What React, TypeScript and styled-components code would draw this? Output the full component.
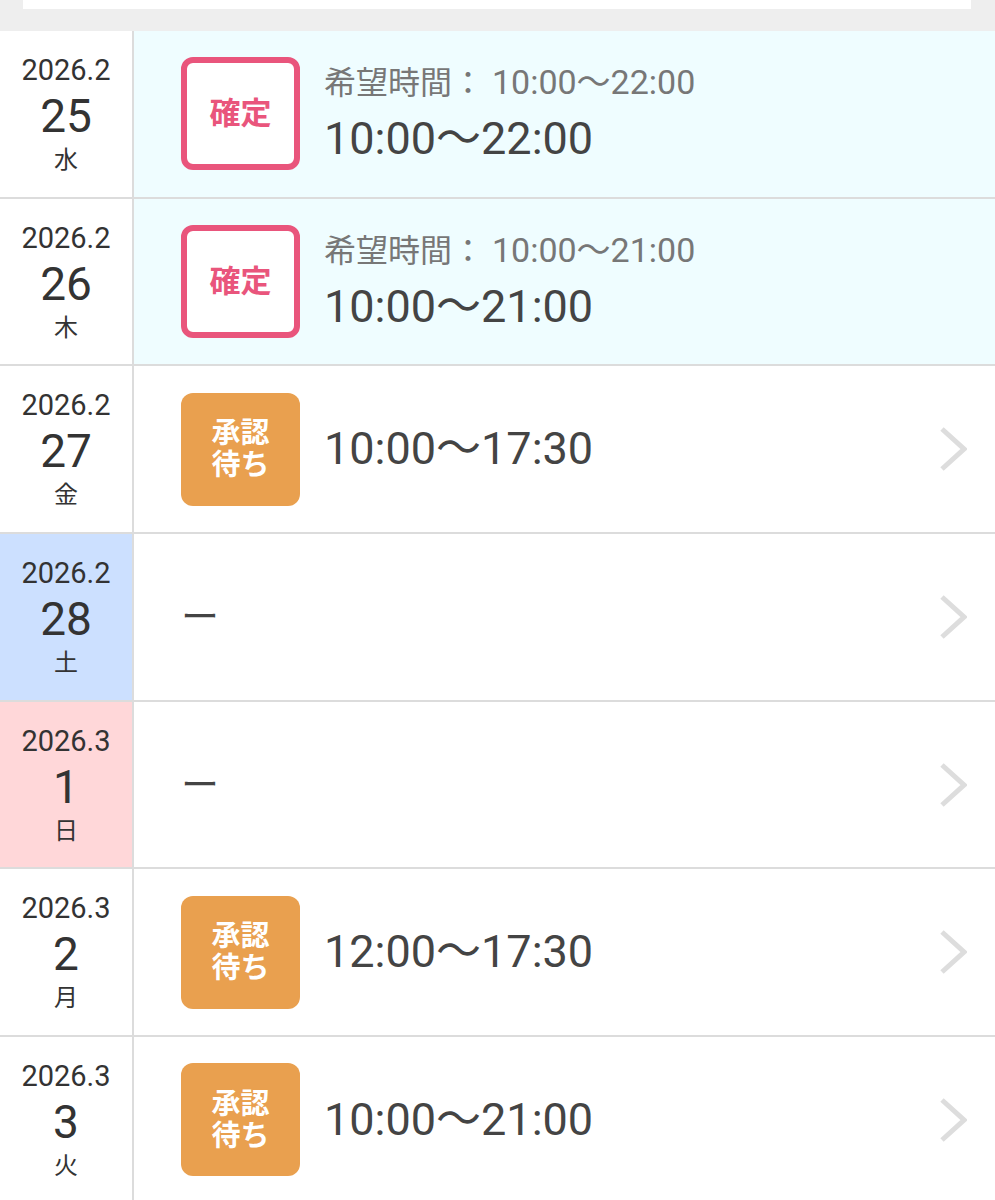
import React from "react";
import styled, { createGlobalStyle, css } from "styled-components";

const GlobalStyle = createGlobalStyle`
  body {
    margin: 0;
    background: #ffffff;
    font-family: Roboto, "Noto Sans CJK JP", sans-serif;
    color: #333333;
  }
`;

const palette = {
  border: "#dcdcdc",
  pink: "#e9557c",
  orange: "#e9a04f",
  confirmedBg: "#effdff",
  saturday: "#cce0ff",
  sunday: "#ffd7d9",
  text: "#444444",
  sub: "#777777",
};

type DayKind = "weekday" | "saturday" | "sunday";
type Status = "confirmed" | "pending" | "none";

interface Shift {
  ym: string;
  day: number;
  wd: string;
  kind: DayKind;
  status: Status;
  time?: string;
  wish?: string;
}

const shifts: Shift[] = [
  { ym: "2026.2", day: 25, wd: "水", kind: "weekday", status: "confirmed", time: "10:00〜22:00", wish: "10:00〜22:00" },
  { ym: "2026.2", day: 26, wd: "木", kind: "weekday", status: "confirmed", time: "10:00〜21:00", wish: "10:00〜21:00" },
  { ym: "2026.2", day: 27, wd: "金", kind: "weekday", status: "pending", time: "10:00〜17:30" },
  { ym: "2026.2", day: 28, wd: "土", kind: "saturday", status: "none" },
  { ym: "2026.3", day: 1, wd: "日", kind: "sunday", status: "none" },
  { ym: "2026.3", day: 2, wd: "月", kind: "weekday", status: "pending", time: "12:00〜17:30" },
  { ym: "2026.3", day: 3, wd: "火", kind: "weekday", status: "pending", time: "10:00〜21:00" },
];

const TopBar = styled.div`
  background: #eeeeee;
  padding: 0 24px 22px 23px;
`;

const TopCard = styled.div`
  height: 9px;
  background: #ffffff;
`;

const List = styled.ul`
  list-style: none;
  margin: 0;
  padding: 0;
`;

const Row = styled.li`
  display: grid;
  grid-template-columns: 134px 1fr;
  height: 165.7px;
  border-bottom: 2px solid ${palette.border};
`;

const DateCell = styled.div<{ $kind: DayKind }>`
  display: flex;
  flex-direction: column;
  align-items: center;
  justify-content: center;
  border-right: 2px solid ${palette.border};
  background: ${({ $kind }) =>
    $kind === "saturday" ? palette.saturday : $kind === "sunday" ? palette.sunday : "#ffffff"};
  color: #333333;
`;

const YearMonth = styled.div`
  font-size: 29px;
  line-height: 42px;
`;

const DayNum = styled.div`
  font-size: 46px;
  line-height: 50px;
`;

const WeekDay = styled.div`
  font-size: 24px;
  line-height: 38px;
`;

const Body = styled.div<{ $confirmed: boolean }>`
  display: flex;
  align-items: center;
  padding: 0 28px 0 47px;
  background: ${({ $confirmed }) => ($confirmed ? palette.confirmedBg : "#ffffff")};
`;

const Badge = styled.div<{ $status: Status }>`
  box-sizing: border-box;
  width: 119px;
  height: 113px;
  border-radius: 12px;
  display: flex;
  align-items: center;
  justify-content: center;
  text-align: center;
  font-weight: 700;
  flex-shrink: 0;
  ${({ $status }) =>
    $status === "confirmed"
      ? css`
          border: 6px solid ${palette.pink};
          background: #ffffff;
          color: ${palette.pink};
          font-size: 31px;
          line-height: 36px;
        `
      : css`
          background: ${palette.orange};
          color: #ffffff;
          font-size: 29px;
          line-height: 32px;
        `}
`;

const TimeStack = styled.div<{ $confirmed: boolean }>`
  margin-left: 24px;
  display: flex;
  flex-direction: column;
  padding-bottom: ${({ $confirmed }) => ($confirmed ? "1px" : "0")};
`;

const WishLine = styled.div`
  font-size: 32px;
  line-height: 44px;
  color: ${palette.sub};
`;

const WishTime = styled.span`
  font-size: 34px;
`;

const TimeText = styled.div<{ $tight?: boolean }>`
  font-size: 45px;
  line-height: 56px;
  color: ${palette.text};
  margin-top: ${({ $tight }) => ($tight ? "6px" : "0")};
`;

const Dash = styled.div`
  font-size: 38px;
  line-height: 56px;
  color: ${palette.text};
`;

const Chevron = styled.svg`
  margin-left: auto;
  flex-shrink: 0;
`;

const ChevronIcon = () => (
  <Chevron width="28" height="46" viewBox="0 0 28 46">
    <polyline
      points="3,3 25,23 3,43"
      fill="none"
      stroke="#dddddd"
      strokeWidth="5"
    />
  </Chevron>
);

const ShiftRow: React.FC<{ shift: Shift }> = ({ shift }) => {
  const confirmed = shift.status === "confirmed";
  return (
    <Row>
      <DateCell $kind={shift.kind}>
        <YearMonth>{shift.ym}</YearMonth>
        <DayNum>{shift.day}</DayNum>
        <WeekDay>{shift.wd}</WeekDay>
      </DateCell>
      <Body $confirmed={confirmed}>
        {shift.status === "none" && <Dash>ー</Dash>}
        {shift.status !== "none" && (
          <>
            <Badge $status={shift.status}>
              {confirmed ? "確定" : (
                <span>
                  承認
                  <br />
                  待ち
                </span>
              )}
            </Badge>
            <TimeStack $confirmed={confirmed}>
              {confirmed && (
                <WishLine>
                  希望時間： <WishTime>{shift.wish}</WishTime>
                </WishLine>
              )}
              <TimeText $tight={confirmed}>{shift.time}</TimeText>
            </TimeStack>
          </>
        )}
        {!confirmed && <ChevronIcon />}
      </Body>
    </Row>
  );
};

const App: React.FC = () => (
  <>
    <GlobalStyle />
    <TopBar>
      <TopCard />
    </TopBar>
    <List>
      {shifts.map((s) => (
        <ShiftRow key={`${s.ym}-${s.day}`} shift={s} />
      ))}
    </List>
  </>
);

export default App;
